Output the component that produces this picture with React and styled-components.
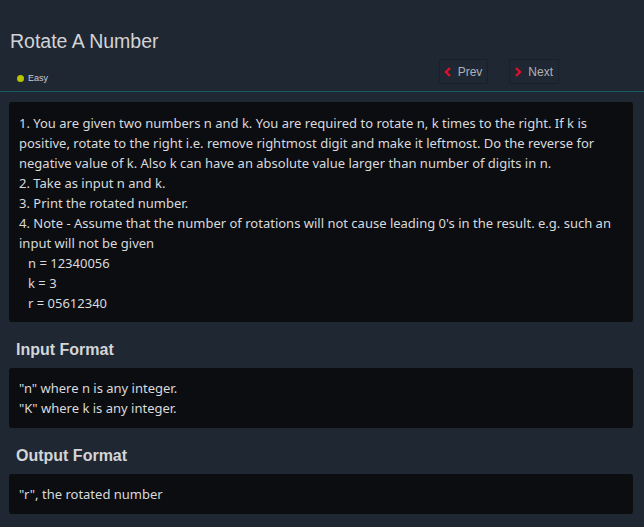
import React from 'react';
import styled, { createGlobalStyle } from 'styled-components';

const GlobalStyle = createGlobalStyle`
  html, body {
    margin: 0;
    padding: 0;
    background: #1f2733;
  }
`;

const Page = styled.div`
  width: 644px;
  min-height: 527px;
  background: #1f2733;
  padding: 0 11px 20px 9px;
  box-sizing: border-box;
  font-family: 'Noto Sans', sans-serif;
`;

const Header = styled.div`
  margin: 0 -11px 0 -9px;
  padding: 29px 85px 0 10px;
  border-bottom: 1px solid #1b5a5a;
`;

const Title = styled.h1`
  margin: 0;
  font-family: 'Liberation Sans', Arial, sans-serif;
  font-weight: 400;
  font-size: 19.5px;
  line-height: 24px;
  color: #d2d3d5;
`;

const MetaRow = styled.div`
  display: flex;
  justify-content: space-between;
  align-items: flex-end;
  margin-top: 6px;
  padding-bottom: 7px;
`;

const Level = styled.div`
  display: flex;
  align-items: center;
  gap: 4px;
  padding: 0 0 1px 7px;
  font-family: 'Liberation Sans', Arial, sans-serif;
  font-size: 9px;
  color: #c9cbce;
`;

const Dot = styled.span`
  width: 7px;
  height: 7px;
  border-radius: 50%;
  background: ${p => p.color};
`;

const Nav = styled.div`
  display: flex;
  gap: 21px;
`;

const NavButton = styled.button`
  display: flex;
  align-items: center;
  gap: 6px;
  height: 25px;
  padding: 0 5px 0 4px;
  background: transparent;
  border: 1px solid #18212a;
  border-radius: 2px;
  font-family: 'Liberation Sans', Arial, sans-serif;
  font-size: 12px;
  color: #aeb1b5;
  cursor: pointer;
`;

const Card = styled.div`
  background: #0c0d11;
  border-radius: 3px;
  margin-top: ${p => p.top || 0}px;
  padding: ${p => p.pad || '10px 10px'};
  font-size: 13px;
  line-height: 20px;
  color: #d9dadc;
`;

const Line = styled.div`
  padding-left: ${p => (p.indent ? 9 : 0)}px;
`;

const SectionTitle = styled.h2`
  margin: 18px 0 0 7px;
  font-family: 'Liberation Sans', Arial, sans-serif;
  font-weight: 700;
  font-size: 16px;
  line-height: 20px;
  color: #d4d5d7;
`;

const Chevron = ({ dir }) => (
  <svg width="8" height="10" viewBox="0 0 8 10">
    <path
      d={dir === 'left' ? 'M6 1 L2 5 L6 9' : 'M2 1 L6 5 L2 9'}
      fill="none"
      stroke="#e0102a"
      strokeWidth="2.4"
    />
  </svg>
);

const description = [
  '1. You are given two numbers n and k. You are required to rotate n, k times to the right. If k is positive, rotate to the right i.e. remove rightmost digit and make it leftmost. Do the reverse for negative value of k. Also k can have an absolute value larger than number of digits in n.',
  '2. Take as input n and k.',
  '3. Print the rotated number.',
  "4. Note - Assume that the number of rotations will not cause leading 0's in the result. e.g. such an input will not be given",
];

const example = ['n = 12340056', 'k = 3', 'r = 05612340'];

export default function App() {
  return (
    <Page>
      <GlobalStyle />
      <Header>
        <Title>Rotate A Number</Title>
        <MetaRow>
          <Level>
            <Dot color="#b7c400" />
            Easy
          </Level>
          <Nav>
            <NavButton>
              <Chevron dir="left" />
              Prev
            </NavButton>
            <NavButton>
              <Chevron dir="right" />
              Next
            </NavButton>
          </Nav>
        </MetaRow>
      </Header>

      <Card top={10} pad="11px 10px 9px">
        {description.map(t => (
          <Line key={t}>{t}</Line>
        ))}
        {example.map(t => (
          <Line indent key={t}>{t}</Line>
        ))}
      </Card>

      <SectionTitle>Input Format</SectionTitle>
      <Card top={8} pad="10px 10px 10px">
        <Line>"n" where n is any integer.</Line>
        <Line>"K" where k is any integer.</Line>
      </Card>

      <SectionTitle>Output Format</SectionTitle>
      <Card top={8} pad="10px 10px 10px">
        <Line>"r", the rotated number</Line>
      </Card>
    </Page>
  );
}
